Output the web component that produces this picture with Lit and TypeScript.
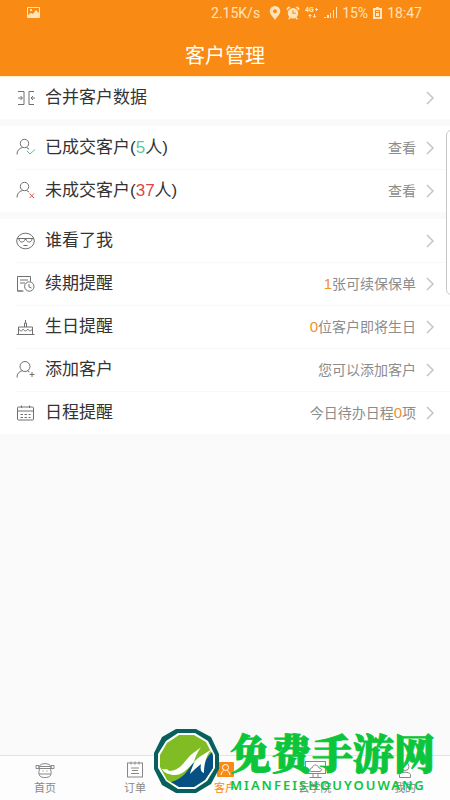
import { LitElement, html, svg, css } from "lit";
import { customElement, property } from "lit/decorators.js";
import { classMap } from "lit/directives/class-map.js";

const icons: Record<string, unknown> = {
  merge: svg`<path d="M2 3.5h6v13H2M18 3.5h-5v13h5M2 10h4M4.500 8l2 2-2 2M19 10h-4M17 8l-2 2 2 2"/>`,
  done: svg`<circle cx="8.500" cy="5.500" r="4.200"/><path d="M1 16.500c0-4 2-6 5.500-7M10.500 9.500l2.500 1.500"/><path class="green" d="M11 13l3 3 5-4.500"/>`,
  undone: svg`<circle cx="8.500" cy="5.500" r="4.200"/><path d="M1 16.500c0-4 2-6 5.500-7M10.500 9.500l2.500 1.500"/><path class="red" d="M13.500 12.500l4.500 4.500M18 12.500l-4.500 4.500"/>`,
  face: svg`<ellipse cx="9.500" cy="10" rx="8.800" ry="7.800"/><path d="M1 7.500h17M3 8c.5 4 5 4 5.800.5h1.400C11 12 15.500 12 16 8M7.500 14.500h4"/>`,
  renew: svg`<path d="M6.500 17H1.500V2.500h13v5M4 6h8M4 9h5M1.500 17h6"/><circle cx="13.300" cy="12.500" r="4.700"/><path d="M13 10v3l2.500 1"/>`,
  cake: svg`<path d="M0.500 17.500h18M2.500 17v-7h14v7M2.500 12c2 2.500 3.500 2.500 4.700 0 1.200 2.500 3.500 2.500 4.700 0 1.200 2.500 2.800 2.500 4.600 0M8.500 10V6h2v4M9.500 6V3"/>`,
  add: svg`<circle cx="9" cy="6.500" r="5"/><path d="M1 17.500c0-4 2-6 5.500-6.800M11.500 10.800l2 1.200M16 12v5M13.500 14.500h5"/>`,
  calendar: svg`<rect x="1.500" y="4" width="16" height="13" rx="1"/><path d="M1.500 8h16M5.500 2.500V5M13.500 2.500V5M4.500 11.500h2.500M8.500 11.500h2.500M12.500 11.500h2M4.500 14.500h2.500M8.500 14.500h2.500M12.500 14.500h2"/>`,
  home: svg`<path d="M4 7c1-4.500 11-4.500 12 0M1 5.500h3v3H1zM16 5.500h3v3h-3zM4 8.500h12v-2H4zM4.500 9c-2 7 1 8.500 5.500 8.500s7.500-1.500 5.500-8.500M4 14h12M7.500 11h1M11.500 11h1"/>`,
  order: svg`<rect x="2.500" y="3" width="15" height="14"/><path d="M6 1.500v3M10 1.500v3M14 1.500v3M6 8h8M7 10.500h6M6 13.500h8"/>`,
  customer: svg`<rect class="solid" x="2" y="2" width="17" height="15" rx="1"/><g class="light"><circle cx="10.500" cy="7.500" r="3"/><path d="M6 15c.5-3 2-4.200 3-4.500M15 15c-.5-3-2-4.200-3-4.500"/></g>`,
  school: svg`<rect x="0.500" y="1.500" width="20" height="12"/><path d="M8 14v3M13 14v3M4.500 17.500h12M6 11.500c-2-1-1-3.500 1-3.500 1-4 6-4 7 0 3 0 3 3 1 3.500z"/>`,
  mine: svg`<circle cx="10" cy="6.500" r="4"/><path d="M4.500 17.500v-3c1-3 10-3 11 0v3z"/>`,
};

@customElement("line-icon")
export class LineIcon extends LitElement {
  @property() name = "";

  static styles = css`
    :host {
      display: block;
      width: 20px;
      height: 20px;
    }
    .glyph {
      display: block;
      width: 20px;
      height: 20px;
      overflow: visible;
      fill: none;
      stroke: currentColor;
      stroke-width: 1;
    }
    .green { stroke: #4fc3a1; }
    .red { stroke: #e05252; }
    .solid { fill: #f98b14; stroke: none; }
    .light { stroke: #fff; }
  `;

  render() {
    return html`<svg class="glyph" viewBox="0 0 20 20" aria-hidden="true">${icons[this.name]}</svg>`;
  }
}

interface Row {
  icon: string;
  label: unknown;
  note?: unknown;
}

const groups: Row[][] = [
  [{ icon: "merge", label: "合并客户数据" }],
  [
    { icon: "done", label: html`已成交客户(<span class="green">5</span>人)`, note: "查看" },
    { icon: "undone", label: html`未成交客户(<span class="red">37</span>人)`, note: "查看" },
  ],
  [
    { icon: "face", label: "谁看了我" },
    { icon: "renew", label: "续期提醒", note: html`<span class="count">1</span>张可续保保单` },
    { icon: "cake", label: "生日提醒", note: html`<span class="count">0</span>位客户即将生日` },
    { icon: "add", label: "添加客户", note: "您可以添加客户" },
    { icon: "calendar", label: "日程提醒", note: html`今日待办日程<span class="count">0</span>项` },
  ],
];

const tabs = [
  { icon: "home", label: "首页" },
  { icon: "order", label: "订单" },
  { icon: "customer", label: "客户", active: true },
  { icon: "school", label: "云学院" },
  { icon: "mine", label: "我的" },
];

@customElement("app-root")
export class AppRoot extends LitElement {
  static styles = css`
    :host {
      display: flex;
      flex-direction: column;
      position: relative;
      min-height: 100vh;
      overflow: hidden;
      background: #fafafa;
      color: #333;
      font-family: "Liberation Sans", "Noto Sans CJK SC", sans-serif;
    }
    .header {
      position: relative;
      z-index: 1;
      background: #f98b14;
      box-shadow: 0 1px 0 #ffeccb;
      color: #fff;
    }
    .status {
      display: flex;
      align-items: center;
      justify-content: space-between;
      height: 26px;
      padding: 0 28px 0 27px;
      color: #ffe3bd;
      font: 14px Roboto, sans-serif;
    }
    .readings {
      display: flex;
      align-items: center;
      gap: 5px;
    }
    .speed { margin-right: 4px; }
    .symbol {
      display: block;
      height: 14px;
      fill: currentColor;
    }
    .title {
      margin: 0;
      height: 50px;
      line-height: 60px;
      text-align: center;
      font-size: 20px;
      font-weight: 400;
    }
    .groups {
      display: flex;
      flex-direction: column;
      gap: 7px;
      flex: 1;
    }
    .group {
      margin: 0;
      padding: 0;
      list-style: none;
      background: #fff;
    }
    .item + .item .row::before {
      content: "";
      position: absolute;
      top: 0;
      left: 16px;
      right: 0;
      border-top: 1px solid #f8f8f8;
    }
    .row {
      position: relative;
      display: flex;
      align-items: center;
      width: 100%;
      height: 43px;
      padding: 0 16px;
      border: 0;
      background: none;
      color: inherit;
      font: inherit;
      text-align: left;
    }
    .icon { color: #707070; }
    .label {
      flex: 1;
      margin-left: 9px;
      font-size: 17px;
      line-height: 24px;
    }
    .note {
      color: #8c8c8c;
      font-size: 14px;
      line-height: 20px;
    }
    .chevron {
      width: 8px;
      height: 14px;
      margin-left: 10px;
      fill: none;
      stroke: #c4c4c4;
      stroke-width: 1.500;
    }
    .green { color: #5cc9a7; }
    .red { color: #dc4646; }
    .count { color: #f5902a; font-size: 15px; }
    .drawer {
      position: absolute;
      top: 130px;
      right: -12px;
      width: 16px;
      height: 165px;
      padding: 0;
      border: 1px solid #c8c8c8;
      border-radius: 5px;
      background: #fff;
    }
    .footer { position: relative; }
    .tabs {
      display: grid;
      grid-template-columns: repeat(5, 1fr);
      border-top: 1px solid #e2e2e2;
      background: #fdfdfd;
    }
    .tab {
      display: flex;
      flex-direction: column;
      align-items: center;
      height: 44px;
      padding-top: 4px;
      box-sizing: border-box;
      color: #888;
      font-size: 11px;
      line-height: 16px;
      text-decoration: none;
    }
    .active { color: #f98b14; }
    .brand {
      position: absolute;
      right: 13px;
      bottom: 6px;
      display: flex;
      align-items: center;
      gap: 10px;
      pointer-events: none;
    }
    .seal {
      display: block;
      width: 67px;
      height: 66px;
    }
    .words {
      display: flex;
      flex-direction: column;
      width: 207px;
      color: #0bc63c;
    }
    .name {
      font-family: "Noto Serif CJK SC", "Noto Sans CJK SC", serif;
      font-size: 41px;
      font-weight: 900;
      line-height: 48px;
      white-space: nowrap;
      -webkit-text-stroke: 1px currentColor;
    }
    .pinyin {
      font-family: "Noto Sans", sans-serif;
      font-size: 13px;
      font-weight: 600;
      letter-spacing: 2px;
      line-height: 18px;
      white-space: nowrap;
    }
  `;

  render() {
    return html`
      <header class="header">
        <div class="status">
          <svg class="symbol" width="13" viewBox="0 0 13 14" aria-hidden="true">
            <path fill-rule="evenodd" d="M1 1h11a1 1 0 0 1 1 1v9a1 1 0 0 1-1 1H1a1 1 0 0 1-1-1V2a1 1 0 0 1 1-1zm0 8l3-2 2 1 3-4 3 3V2H1zM3 3h2v2H3z" />
          </svg>
          <div class="readings">
            <span class="speed">2.15K/s</span>
            <svg class="symbol" width="12" viewBox="0 0 12 14" aria-hidden="true">
              <path fill-rule="evenodd" d="M6 0a5.300 5.300 0 0 1 5.300 5.300C11.300 8 8 11 6 14 4 11 .7 8 .7 5.300A5.300 5.300 0 0 1 6 0zm0 3.300a2 2 0 1 0 0 4 2 2 0 0 0 0-4z" />
            </svg>
            <svg class="symbol" width="14" viewBox="0 0 14 14" aria-hidden="true">
              <path fill-rule="evenodd" d="M7 2a5 5 0 1 1 0 10.500A5 5 0 0 1 7 2zm-.6 2.300v3.500h3.500V6.700H7.500V4.300zM1 4.500L.5 2.500l2-2 2 .5zM13 4.500l.5-2-2-2-2 .5zM2 13l1.500-2 1 1-1 1.500zM12 13l-1.500-2-1 1 1 1.500z" />
            </svg>
            <svg class="symbol" width="14" viewBox="0 0 14 14" aria-hidden="true">
              <text x="0" y="6" font-size="7" font-weight="700">4G</text>
              <path d="M10 3h3v1h-3zM11 2h1v3h-1zM3 10l2-2 2 2H5.500v2h-1v-2zM7.500 10l2 2 2-2H10V8H9v2z" />
            </svg>
            <svg class="symbol" width="13" viewBox="0 0 13 14" aria-hidden="true">
              <path d="M0 11h2v1H0zM3 9h2v3H3zM6 7h1v5H6zM9 4h1v8H9zM12 1h1v11h-1z" />
            </svg>
            <span>15%</span>
            <svg class="symbol" width="9" viewBox="0 0 9 14" aria-hidden="true">
              <path fill-rule="evenodd" d="M3 1h3v1h3v11H0V2h3zM2 4v7h5V4zM3 5h3v1H3zM3 7h3v3H3z" />
            </svg>
            <span>18:47</span>
          </div>
        </div>
        <h1 class="title">客户管理</h1>
      </header>

      <main class="groups">
        ${groups.map(
          (rows) => html`<ul class="group">
            ${rows.map(
              (row) => html`<li class="item">
                <button class="row" type="button">
                  <line-icon class="icon" name=${row.icon}></line-icon>
                  <span class="label">${row.label}</span>
                  ${row.note ? html`<span class="note">${row.note}</span>` : ""}
                  <svg class="chevron" viewBox="0 0 8 14" aria-hidden="true"><path d="M1 1l6 6-6 6" /></svg>
                </button>
              </li>`
            )}
          </ul>`
        )}
      </main>

      <button class="drawer" type="button" aria-label="侧边栏"></button>

      <footer class="footer">
        <nav class="tabs">
          ${tabs.map(
            (tab) => html`<a class=${classMap({ tab: true, active: !!tab.active })} href="#">
              <line-icon name=${tab.icon}></line-icon>
              <span>${tab.label}</span>
            </a>`
          )}
        </nav>
        <div class="brand">
          <svg class="seal" viewBox="0 0 67 66" aria-hidden="true">
            <path fill="#07605c" d="M23 1h20l15 8 8 17v15l-8 15-15 9H23L9 57 1 41V25L9 9z" />
            <path fill="#fff" d="M25 5h17l13 8 7 14v13l-8 13-12 8H25L13 53 5 40V26l8-13z" />
            <path fill="#80bd25" d="M26 7h15l12 7 7 14v12l-8 12-11 7H26L14 52 7 39V27l7-12z" />
            <path fill="#075083" d="M59 24l1 4v12l-8 12-11 7H26l-8-5c12-3 18-12 23-22l-2 12 9-11 1 11c2-8 4-14 10-20z" />
            <path fill="#fff" d="M9 41c3 1 5-1 7 2 9 0 14-7 19-13 5-6 9-7 13-11-4 6-6 10-7 15 5-6 11-8 18-13-6 6-8 15-8 24-3-1-4-4-3-9-4 3-8 7-11 10 1-5 3-8 5-13-8 9-14 15-22 14-4-1-8-1-11-6z" />
          </svg>
          <div class="words">
            <span class="name">免费手游网</span>
            <span class="pinyin">MIANFEISHOUYOUWANG</span>
          </div>
        </div>
      </footer>
    `;
  }
}
